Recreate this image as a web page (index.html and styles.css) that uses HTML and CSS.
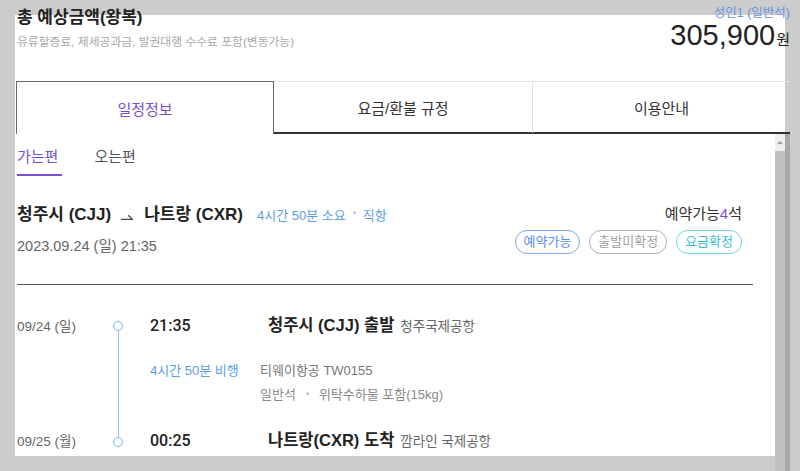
FILE: index.html
```html
<!DOCTYPE html>
<html lang="ko">
<head>
<meta charset="utf-8">
<title>총 예상금액</title>
<link rel="stylesheet" href="styles.css">
</head>
<body>
<div class="panel">
  <header class="summary">
    <div class="summary-left">
      <h1 class="summary-title">총 예상금액(왕복)</h1>
      <p class="summary-note">유류할증료, 제세공과금, 발권대행 수수료 포함(변동가능)</p>
    </div>
    <div class="summary-right">
      <div class="pax">성인1 (일반석)</div>
      <div class="price"><span class="price-num">305,900</span><span class="price-unit">원</span></div>
    </div>
  </header>
  <nav class="tabs">
    <div class="tab active">일정정보</div>
    <div class="tab">요금/환불 규정</div>
    <div class="tab">이용안내</div>
  </nav>
  <div class="scroll">
    <div class="scroll-content">
      <div class="subtabs">
        <span class="subtab active">가는편</span>
        <span class="subtab">오는편</span>
      </div>
      <div class="route">
        <div class="route-main">
          <div class="route-title">청주시 (CJJ)<svg class="route-arrow" width="12" height="7" viewBox="0 0 12 7"><path d="M0 6.3 H11.5 L7.2 2.2" fill="none" stroke="#444" stroke-width="1.3"/></svg>나트랑 (CXR)<span class="route-meta">4시간 50분 소요<i class="dot dot-blue"></i>직항</span></div>
          <div class="route-date">2023.09.24 (일) 21:35</div>
        </div>
        <div class="route-side">
          <div class="seats">예약가능<em>4</em>석</div>
          <div class="badges">
            <span class="badge badge-blue">예약가능</span>
            <span class="badge badge-gray">출발미확정</span>
            <span class="badge badge-teal">요금확정</span>
          </div>
        </div>
      </div>
      <div class="divider"></div>
      <div class="timeline">
        <div class="tl-date">09/24 (일)</div>
        <div class="tl-marker"><span class="tl-circle"></span><span class="tl-line"></span><span class="tl-circle"></span></div>
        <div class="tl-time">21:35</div>
        <div class="tl-place">청주시 (CJJ) 출발<span class="tl-airport">청주국제공항</span></div>

        <div class="tl-duration">4시간 50분 비행</div>
        <div class="tl-info">
          <div class="tl-flight">티웨이항공 TW0155</div>
          <div class="tl-cabin">일반석<i class="dot dot-gray"></i>위탁수하물 포함(15kg)</div>
        </div>

        <div class="tl-date tl-r3">09/25 (월)</div>
        <div class="tl-time tl-r3">00:25</div>
        <div class="tl-place tl-r3">나트랑(CXR) 도착<span class="tl-airport">깜라인 국제공항</span></div>
      </div>
    </div>
    <div class="scrollbar"><div class="sb-up"></div><div class="sb-thumb"></div></div>
  </div>
</div>
</body>
</html>
```
FILE: styles.css
```css
html, body {
  margin: 0;
  height: 471px;
  overflow: hidden;
}
body {
  background: #cccccc;
  font-family: "Liberation Sans", "Noto Sans CJK KR", sans-serif;
  color: #222;
}
.panel {
  display: flow-root;
  margin: 15px 0 0 15px;
  width: 770px;
  height: 441px;
  background: #fff;
}
.summary {
  display: flex;
  justify-content: space-between;
  margin: -12px 0 0 2px;
  width: 773px;
  height: 50px;
}
.summary-title {
  margin: 0;
  padding-top: 4px;
  font-size: 17px;
  line-height: 22px;
  font-weight: 700;
  color: #222;
}
.summary-note {
  margin: 5px 0 0;
  font-size: 11.8px;
  line-height: 16px;
  color: #a8a8a8;
}
.summary-right {
  text-align: right;
}
.pax {
  padding-top: 2px;
  font-size: 12.5px;
  line-height: 16px;
  color: #6a93e6;
}
.price {
  margin-top: -2px;
  line-height: 32px;
  color: #222;
}
.price-num {
  font-size: 29px;
}
.price-unit {
  font-size: 15px;
  margin-left: 1px;
}
.tabs {
  display: grid;
  grid-template-columns: repeat(3, 258px);
  margin: 28px 0 0 1px;
  background: #fff;
}
.tab {
  height: 53px;
  box-sizing: border-box;
  display: flex;
  align-items: center;
  justify-content: center;
  font-size: 15px;
  color: #333;
  border-top: 1px solid #e4e4e4;
  border-bottom: 2px solid #333;
}
.tab + .tab + .tab {
  border-left: 1px solid #e4e4e4;
}
.tab.active {
  border: 1px solid #666;
  border-bottom: none;
  color: #7a4fcf;
}
.scroll {
  display: flex;
  align-items: flex-start;
  width: 775px;
}
.scroll-content {
  flex: none;
  width: 760px;
  height: 322px;
  box-sizing: border-box;
  padding: 0 22px 0 2px;
  overflow: hidden;
}
.scrollbar {
  flex: none;
  width: 10px;
  height: 337px;
  border-right: 5px solid #a9a9a9;
  background: #c1c1c1;
  display: flex;
  flex-direction: column;
}
.sb-up {
  height: 17px;
  background: #eeeeee;
  display: flex;
  align-items: center;
  justify-content: center;
}
.sb-up::before {
  content: "";
  border-left: 3px solid transparent;
  border-right: 3px solid transparent;
  border-bottom: 3px solid #a0a0a0;
}
.sb-thumb {
  flex: 1;
  background: #c1c1c1;
}
.subtabs {
  display: flex;
  gap: 32px;
  padding-top: 13px;
}
.subtab {
  font-size: 15px;
  line-height: 20px;
  padding: 0 4px 7px 0;
  border-bottom: 2px solid transparent;
  color: #555;
}
.subtab.active {
  color: #7a4fcf;
  border-bottom-color: #7a4fcf;
}
.route {
  display: flex;
  justify-content: space-between;
  margin-top: 28px;
  padding-right: 11px;
}
.route-title {
  font-size: 17px;
  line-height: 22px;
  font-weight: 700;
  color: #222;
}
.route-arrow {
  margin: 0 11px 0 10px;
}
.route-meta {
  margin-left: 14px;
  font-size: 13px;
  font-weight: 400;
  color: #5b9de8;
}
.dot {
  display: inline-block;
  width: 3px;
  height: 3px;
  border-radius: 50%;
  vertical-align: 4px;
}
.dot-blue {
  background: #b5ccec;
  margin: 0 7px;
  vertical-align: 6px;
}
.dot-gray {
  background: #c4c4c4;
  margin: 0 10px;
}
.route-date {
  margin-top: 9px;
  font-size: 14.5px;
  line-height: 20px;
  color: #666;
}
.route-side {
  display: flex;
  flex-direction: column;
  align-items: flex-end;
}
.seats {
  font-size: 15px;
  line-height: 20px;
  color: #333;
}
.seats em {
  font-style: normal;
  color: #7a4fcf;
}
.badges {
  display: flex;
  gap: 9px;
  margin-top: 6px;
}
.badge {
  height: 24px;
  box-sizing: border-box;
  padding: 0 8px;
  border: 1px solid;
  border-radius: 12px;
  font-size: 13px;
  line-height: 22px;
}
.badge-blue {
  border-color: #7aa6f5;
  color: #5a8ef0;
}
.badge-gray {
  border-color: #b3b3b3;
  color: #a0a0a0;
}
.badge-teal {
  border-color: #72d6dc;
  color: #3cbfca;
}
.divider {
  margin-top: 28px;
  border-top: 1px solid #555;
}
.timeline {
  display: grid;
  grid-template-columns: 88px 26px 137px 1fr;
  align-items: baseline;
  margin-top: 29px;
}
.tl-date {
  grid-column: 1;
  font-size: 13.5px;
  line-height: 22px;
  color: #666;
}
.tl-marker {
  grid-column: 2;
  grid-row: 1 / 4;
  align-self: stretch;
  display: flex;
  flex-direction: column;
  align-items: center;
  padding: 7px 0 6px;
}
.tl-circle {
  width: 10px;
  height: 10px;
  box-sizing: border-box;
  border: 1.5px solid #72b4f1;
  border-radius: 50%;
  background: #fff;
}
.tl-line {
  flex: 1;
  width: 1px;
  background: #8cc5f5;
}
.tl-time {
  grid-column: 3;
  padding-left: 19px;
  font-family: Roboto, "Noto Sans CJK KR", sans-serif;
  font-size: 16px;
  line-height: 22px;
  font-weight: 500;
  color: #222;
}
.tl-place {
  grid-column: 4;
  font-size: 16.5px;
  line-height: 22px;
  font-weight: 700;
  color: #222;
}
.tl-airport {
  margin-left: 6px;
  font-size: 13.5px;
  font-weight: 400;
  color: #666;
}
.tl-duration {
  grid-column: 3;
  grid-row: 2;
  padding: 25px 0 0 19px;
  font-size: 13px;
  line-height: 16px;
  color: #5b9de8;
}
.tl-info {
  grid-column: 4;
  grid-row: 2;
  margin-left: -8px;
  padding: 25px 0 26px;
  font-size: 13px;
  line-height: 16px;
}
.tl-flight {
  color: #777;
}
.tl-cabin {
  margin-top: 8px;
  color: #888;
}
.tl-r3 {
  grid-row: 3;
}
```
